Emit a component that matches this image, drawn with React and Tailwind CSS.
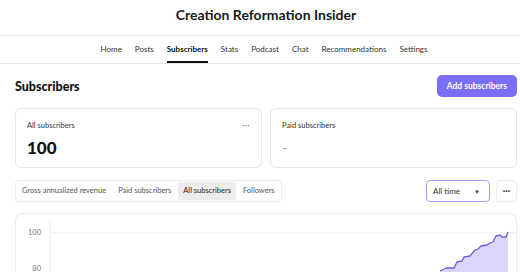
import React from 'react';

const NAV = ['Home', 'Posts', 'Subscribers', 'Stats', 'Podcast', 'Chat', 'Recommendations', 'Settings'];
const TABS = ['Gross annualized revenue', 'Paid subscribers', 'All subscribers', 'Followers'];

// chart line, in chart-svg coordinates (svg starts at x=16, y=214)
const LINE = [
  [424, 57], [430, 54], [438, 54], [441, 48], [446, 47], [448, 43], [454, 42],
  [459, 36], [462, 35], [465, 32], [471, 31], [474, 29], [477, 28], [480, 22],
  [484, 21], [486, 23], [490, 23], [492, 18],
];

function Chart() {
  const pts = LINE.map(p => p.join(',')).join(' ');
  const area = `M424,80 L${LINE.map(p => p.join(',')).join(' L')} L492,80 Z`;
  return (
    <svg width="500" height="60" className="block">
      <line x1="34" y1="8" x2="34" y2="60" stroke="#e8e8e8" strokeWidth="1" />
      <line x1="35" y1="18.5" x2="500" y2="18.5" stroke="#f1f1f1" strokeWidth="1" />
      <text x="25" y="21" textAnchor="end" fontSize="7.5" fill="#777" fontFamily="Lato, sans-serif">100</text>
      <text x="25" y="57" textAnchor="end" fontSize="7.5" fill="#777" fontFamily="Lato, sans-serif">80</text>
      <path d={area} fill="#d9d5fb" />
      <polyline points={pts} fill="none" stroke="#6a5ed8" strokeWidth="1.3" strokeLinejoin="round" />
    </svg>
  );
}

export default function App() {
  return (
    <div className="w-[520px] h-[272px] overflow-hidden bg-white text-[#222] font-['Lato',sans-serif]">
      {/* Title */}
      <div className="h-[36px] flex items-center justify-center border-b border-[#eeeeee] pl-[12px]">
        <h1 className="text-[14px] font-bold text-[#1a1a1a] -mt-[6px]">Creation Reformation Insider</h1>
      </div>

      {/* Nav */}
      <div className="h-[28px] flex justify-center gap-[13px] border-b border-[#e6e6e6] pl-[8px]">
        {NAV.map(n => (
          <div
            key={n}
            className={`flex items-center text-[8px] border-b-2 ${n === 'Subscribers'
              ? 'font-bold text-[#111] border-[#111]'
              : 'text-[#333] border-transparent'
              }`}
          >
            {n}
          </div>
        ))}
      </div>

      <div className="pl-[15px] pr-[3px]">
        {/* Heading row */}
        <div className="flex items-center justify-between mt-[11px] h-[22px]">
          <h2 className="text-[12.5px] font-black text-[#111] mt-[2px]">Subscribers</h2>
          <button className="h-[22px] px-[10px] rounded-[5px] bg-[#7b6ef6] text-white text-[8.5px] font-bold">
            Add subscribers
          </button>
        </div>

        {/* Stat cards */}
        <div className="grid grid-cols-2 gap-[8px] mt-[11px]">
          <div className="h-[60px] rounded-[6px] border border-[#e5e5e5] px-[11px] pt-[11px]">
            <div className="flex justify-between items-center text-[7.5px] text-[#333]">
              <span>All subscribers</span>
              <span className="text-[#555] tracking-[0.5px]">···</span>
            </div>
            <div className="text-[17px] font-black text-[#111] mt-[6px] leading-[22px]">100</div>
          </div>
          <div className="h-[60px] rounded-[6px] border border-[#e5e5e5] px-[11px] pt-[11px]">
            <div className="text-[7.5px] text-[#333]">Paid subscribers</div>
            <div className="text-[10px] text-[#888] mt-[5px] leading-[22px]">–</div>
          </div>
        </div>

        {/* Tabs + filter */}
        <div className="flex items-center justify-between mt-[12px] h-[22px]">
          <div className="flex items-center h-[22px] rounded-[4px] border border-[#ececec] px-[1px] gap-[2px]">
            {TABS.map(t => (
              <div
                key={t}
                className={`h-[18px] flex items-center px-[5px] rounded-[2px] text-[7.5px] ${t === 'All subscribers'
                  ? 'bg-[#ececec] text-[#222]'
                  : 'text-[#555]'
                  }`}
              >
                {t}
              </div>
            ))}
          </div>
          <div className="flex items-center gap-[6px]">
            <div className="w-[64px] h-[22px] rounded-[4px] border border-[#a79ff0] flex items-center justify-between pl-[6px] pr-[9px] text-[8px] text-[#333]">
              <span>All time</span>
              <span className="text-[6px]">▼</span>
            </div>
            <div className="w-[21px] h-[22px] rounded-[4px] border border-[#ececec] flex items-center justify-center text-[9px] font-bold text-[#333]">
              ···
            </div>
          </div>
        </div>

        {/* Chart card */}
        <div className="mt-[11px] rounded-t-[8px] border border-b-0 border-[#ececec] h-[80px] overflow-hidden">
          <Chart />
        </div>
      </div>
    </div>
  );
}
